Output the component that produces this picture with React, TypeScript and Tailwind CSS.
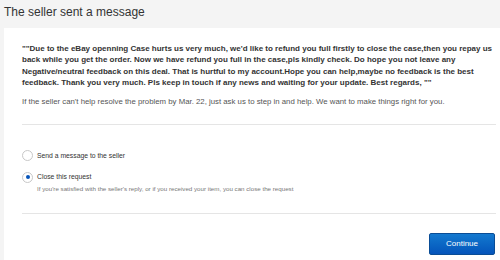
export default function App() {
  return (
    <div
      className="w-[500px] h-[260px] overflow-hidden bg-[#f4f4f4] pl-1 flex flex-col"
      style={{ fontFamily: '"Liberation Sans", Arial, sans-serif' }}
    >
      <h1 className="h-[28px] text-[12px] leading-[24px] text-[#333]">The seller sent a message</h1>
      <div className="flex-1 bg-white pl-[18px] pr-1 pt-[15px]">
        <p className="text-[8px] leading-[11.3px] font-bold text-[#333]">
          ""Due to the eBay openning Case hurts us very much, we'd like to refund you full firstly to close the case,then you repay us back while you get the order. Now we have refund you full in the case,pls kindly check. Do hope you not leave any Negative/neutral feedback on this deal. That is hurtful to my account.Hope you can help,maybe no feedback is the best feedback. Thank you very much. Pls keep in touch if any news and waiting for your update. Best regards, ""
        </p>
        <p className="mt-[7.5px] text-[7.8px] leading-[12px] text-[#555]">
          If the seller can't help resolve the problem by Mar. 22, just ask us to step in and help. We want to make things right for you.
        </p>
        <div className="mt-[16px] border-t border-[#e5e5e5]" />
        <div className="pt-[25px] pb-[20px] flex flex-col gap-[9.5px]">
          <label className="flex items-center gap-[4px] text-[6.8px] text-[#333] leading-[12px]">
            <span className="w-[11px] h-[11px] rounded-full border border-[#c8c8c8] bg-white" />
            Send a message to the seller
          </label>
          <div>
            <label className="flex items-center gap-[4px] text-[6.8px] text-[#333] leading-[12px]">
              <span className="w-[11px] h-[11px] rounded-full border border-[#c8c8c8] bg-white flex items-center justify-center">
                <span className="w-[4px] h-[4px] rounded-full bg-[#0654ba]" />
              </span>
              Close this request
            </label>
            <p className="pl-[15px] mt-[1.5px] text-[6.2px] leading-[8px] text-[#777]">
              If you're satisfied with the seller's reply, or if you received your item, you can close the request
            </p>
          </div>
        </div>
        <div className="border-t border-[#e5e5e5]" />
        <div className="flex justify-end pt-[19px] pr-[1px]">
          <button className="w-[66px] h-[22px] rounded-[2px] border border-[#0a4d96] bg-gradient-to-b from-[#1479cf] to-[#0654ba] text-white text-[8px]">
            Continue
          </button>
        </div>
      </div>
    </div>
  );
}
